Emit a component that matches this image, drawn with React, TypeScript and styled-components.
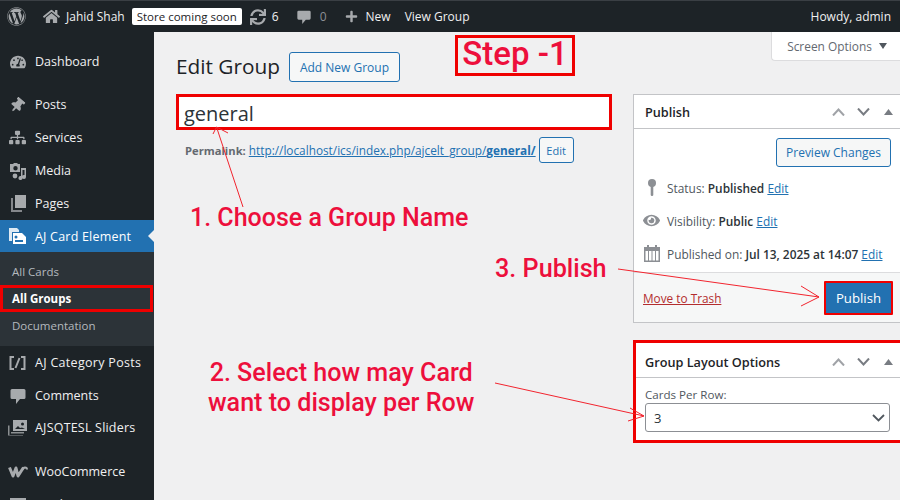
import React from "react";
import styled, { createGlobalStyle } from "styled-components";
import { FaWordpress, FaTachometerAlt, FaThumbtack, FaSitemap, FaSync, FaPlus, FaHome, FaEye } from "react-icons/fa";

const Global = createGlobalStyle`
  html, body { margin: 0; padding: 0; background: #f0f0f1; }
  body { width: 900px; height: 500px; overflow: hidden; font-family: "Open Sans", "Noto Sans", sans-serif; }
`;
const Page = styled.div`position: relative; width: 900px; height: 500px; overflow: hidden; display: flex; flex-direction: column; background: #f0f0f1;`;
const TopBar = styled.header`height: 32px; flex: none; background: #1d2327; color: #f0f0f1; display: flex; align-items: center; font-size: 12px; padding: 0 9px 0 7px; box-sizing: border-box; border-top: 1px solid #3a3f44;`;
const BarItem = styled.span<{ $gap?: number; $dim?: boolean; $inner?: number }>`display: inline-flex; align-items: center; gap: ${p => p.$inner ?? 6}px; margin-left: ${p => p.$gap ?? 0}px; color: ${p => p.$dim ? "#8c8f94" : "#f0f0f1"}; svg { color: #a7aaad; flex: none; }`;
const Badge = styled.span`background: #fff; color: #1d2327; border-radius: 2px; height: 17px; padding: 0 5px; margin-left: 7px; line-height: 17px; font-size: 11.5px;`;
const Howdy = styled.span`margin-left: auto;`;
const Body = styled.div`flex: 1; display: flex; min-height: 0;`;
const Side = styled.nav`width: 154px; flex: none; background: #1d2327; padding-top: 13px; box-sizing: border-box; overflow: hidden;`;
const MenuItem = styled.div<{ $active?: boolean; $h?: number; $mt?: number; $track?: number }>`position: relative; height: ${p => p.$h ?? 33}px; margin-top: ${p => p.$mt ?? 0}px; display: flex; align-items: center; padding-left: 8px; gap: 8px; font-size: 12.5px; letter-spacing: ${p => p.$track ?? 0}px; background: ${p => p.$active ? "#2271b1" : "transparent"}; color: ${p => p.$active ? "#fff" : "#f0f0f1"}; svg { flex: none; color: ${p => p.$active ? "#fff" : "#a7aaad"}; }`;
const IconSlot = styled.span`width: 19px; height: 18px; display: flex; align-items: center; justify-content: center; flex: none;`;
const TiltSlot = styled(IconSlot)`transform: rotate(40deg);`;
const Notch = styled.span`position: absolute; right: 0; top: 10px; border: 6px solid transparent; border-right-color: #f0f0f1; border-left-width: 0;`;
const SubMenu = styled.div`background: #2c3338; padding: 6px 0 7px;`;
const SubItem = styled.div<{ $current?: boolean }>`height: 27px; line-height: 27px; padding-left: 12px; font-size: 11.5px; font-weight: ${p => p.$current ? 700 : 400}; color: ${p => p.$current ? "#fff" : "#b4b9be"}; box-sizing: border-box;`;
const Marked = styled.div`outline: 3px solid #ef0000; outline-offset: -3px; margin-right: 1px; background: #2c3338;`;

const Main = styled.main`position: relative; flex: 1; min-width: 0; padding: 20px 0 0 22px; box-sizing: border-box;`;
const ScreenOptions = styled.div`position: absolute; top: 0; right: 0; width: 129px; height: 29px; background: #fff; border: 1px solid #dcdcde; border-top: none; border-right: none; border-radius: 0 0 0 4px; box-sizing: border-box; display: flex; align-items: center; justify-content: center; gap: 7px; padding-left: 2px; font-size: 11.9px; color: #646970;`;
const Caret = styled.span`width: 0; height: 0; border: 4px solid transparent; border-top: 6px solid #50575e; border-bottom: 0;`;
const TitleRow = styled.div`display: flex; align-items: center; gap: 9px; height: 30px;`;
const H1 = styled.h1`margin: -2px 0 0 0; font-weight: 400; font-size: 20.8px; color: #1d2327;`;
const OutlineBtn = styled.span<{ $w: number; $h: number; $fs?: number }>`display: inline-flex; align-items: center; justify-content: center; width: ${p => p.$w}px; height: ${p => p.$h}px; box-sizing: border-box; border: 1px solid #2271b1; color: #2271b1; background: #f6f7f7; border-radius: 3px; font-size: ${p => p.$fs ?? 12}px; flex: none;`;
const Cols = styled.div`display: flex; margin-top: 12px; gap: 21px; align-items: flex-start;`;
const LeftCol = styled.div`width: 436px; flex: none;`;
const TitleInput = styled.div`height: 36px; box-sizing: border-box; border: 3px solid #ef0000; background: #fff; font-size: 20px; padding-left: 5px; color: #2c3338; line-height: 33px;`;
const Permalink = styled.div`display: flex; align-items: center; margin: 7px 0 0 9px; height: 26px; font-size: 11.2px; color: #646970; white-space: nowrap; gap: 3px;`;
const Link = styled.a`color: #2271b1; text-decoration: underline;`;
const PermaLinkUrl = styled(Link)`font-size: 11.8px; margin-top: -1px;`;
const RightCol = styled.div`width: 267px; flex: none; display: flex; flex-direction: column; gap: 17px;`;
const Box = styled.section<{ $mark?: boolean }>`background: #fff; border: ${p => p.$mark ? "3px solid #ef0000" : "1px solid #c3c4c7"}; border-right: none; box-sizing: border-box;`;
const BoxHead = styled.div<{ $h: number; $pad: number; $top?: number }>`height: ${p => p.$h}px; box-sizing: border-box; border-bottom: 1px solid #c3c4c7; display: flex; align-items: center; padding: ${p => p.$top ?? 0}px 0 0 ${p => p.$pad}px; font-size: 12.7px; font-weight: 600; color: #1d2327; justify-content: space-between;`;
const Handles = styled.span`display: flex; align-items: center; gap: 12px; margin-right: 7px; color: #787c82;`;
const FadedHandle = styled.span`opacity: 0.7; display: flex;`;
const TriHandle = styled.svg`margin-left: 2px;`;
const Actions = styled.div`display: flex; justify-content: flex-end; padding: 9px 9px 0 0;`;
const Meta = styled.div`display: flex; align-items: center; height: 33px; padding-left: 8px; font-size: 11.9px; color: #50575e; gap: 6px; white-space: nowrap; b { color: #2c3338; font-weight: 600; } svg { color: #8c8f94; flex: none; }`;
const MetaList = styled.div`padding-top: 4px;`;
const Footer = styled.div`height: 50px; margin-top: 2px; box-sizing: border-box; border-top: 1px solid #dcdcde; background: #f6f7f7; display: flex; align-items: center; justify-content: space-between; padding: 0 7px 0 9px;`;
const Trash = styled.a`color: #b32d2e; text-decoration: underline; font-size: 11.8px;`;
const PublishBtn = styled.span`width: 69px; height: 34px; box-sizing: border-box; background: #2271b1; border: 2px solid #ef0000; color: #fff; font-size: 13.2px; display: flex; align-items: center; justify-content: center; border-radius: 1px;`;
const Field = styled.div`padding: 8px 10px 0 9px; height: 62px; box-sizing: border-box;`;
const FieldLabel = styled.div`font-size: 11.6px; color: #50575e; height: 17px; line-height: 17px;`;
const SelectBox = styled.div`height: 29px; box-sizing: border-box; border: 1px solid #8c8f94; border-radius: 3px; display: flex; align-items: center; justify-content: space-between; padding: 0 4px 0 8px; font-size: 13px; color: #2c3338;`;

const Overlay = styled.svg`position: absolute; inset: 0; width: 900px; height: 500px; pointer-events: none;`;
const Note = styled.div<{ $x: number; $y: number; $fs: number; $center?: boolean }>`position: absolute; left: ${p => p.$x}px; top: ${p => p.$y}px; font-family: Roboto, "Liberation Sans", sans-serif; font-weight: 500; font-size: ${p => p.$fs}px; color: #ed0f3c; white-space: nowrap; line-height: 30px; text-align: ${p => p.$center ? "center" : "left"};`;
const Step = styled.div`position: absolute; left: 455px; top: 35px; width: 120px; height: 41px; box-sizing: border-box; border: 3px solid #ef0000; font-family: Roboto, "Liberation Sans", sans-serif; font-weight: 500; font-size: 33px; line-height: 32px; color: #ed0f3c; text-align: center; white-space: nowrap;`;

const Chevron = ({ up }: { up?: boolean }) => (
  <svg width="13" height="8" viewBox="0 0 13 8" fill="none" stroke="currentColor" strokeWidth="2"><path d={up ? "M1 7.500l5.500-6L12 7.500" : "M1 .5l5.500 6L12 .5"} /></svg>
);
const HandleSet = () => (
  <Handles>
    <FadedHandle><Chevron up /></FadedHandle>
    <Chevron />
    <TriHandle width="9" height="6" viewBox="0 0 9 6" fill="currentColor"><path d="M4.500 0l4.500 6H0z" /></TriHandle>
  </Handles>
);
const Bubble = ({ s = 18 }: { s?: number }) => <svg width={s} height={s} viewBox="0 0 18 18" fill="currentColor"><path d="M3 2h12a1.500 1.500 0 0 1 1.500 1.500v7A1.500 1.500 0 0 1 15 12h-4l-4 5v-5H3a1.500 1.500 0 0 1-1.500-1.500v-7A1.500 1.500 0 0 1 3 2z" /></svg>;
const MediaIcon = () => <svg width="18" height="18" viewBox="0 0 18 18" fill="currentColor"><path d="M1 2h3l1-1h3l1 1h2v8H1zM6.500 4a2.200 2.200 0 1 0 0 4.400 2.200 2.200 0 0 0 0-4.400z" fillRule="evenodd" /><path d="M12 6h5v9a2 2 0 1 1-1.500-1.900V8h-2v8a2 2 0 1 1-1.500-1.900z" /><circle cx="6" cy="14" r="2.400" /></svg>;
const PagesIcon = () => <svg width="16" height="17" viewBox="0 0 16 17" fill="currentColor"><path d="M5 0h11v13H5z" /><path d="M3 3v12h9v2H1V3z" opacity=".75" /></svg>;
const CardIcon = () => <svg width="19" height="18" viewBox="0 0 19 18" fill="currentColor"><path d="M1 1h8l2 2v2H4v9H1z" opacity=".85" /><path d="M5 6h9l4 4v7H5zM8 8.500a1.500 1.500 0 1 0 0 3 1.500 1.500 0 0 0 0-3zM7 13v2h8v-2z" fillRule="evenodd" /></svg>;
const ShortIcon = () => <svg width="17" height="14" viewBox="0 0 17 14" fill="none" stroke="currentColor" strokeWidth="2"><path d="M5 1H1.500v12H5M12 1h3.500v12H12M10.500 2L6.500 12" /></svg>;
const SliderIcon = () => <svg width="19" height="16" viewBox="0 0 19 16" fill="currentColor"><path d="M5 0h14v11H5zM14.500 2.500a1.500 1.500 0 1 0 0 3 1.500 1.500 0 0 0 0-3zM7 9l3-3 2 2 2-.5 3 1.500z" fillRule="evenodd" /><path d="M3 3v9h13v1.500H3zM0 5.500v10h15V15H1.500V5.500z" opacity=".8" /></svg>;
const WooIcon = () => <svg width="20" height="12" viewBox="0 0 20 12" fill="none" stroke="currentColor" strokeWidth="3" strokeLinejoin="round"><path d="M1.500 1.500L5 10l3-8 2 8 5.500-8.500" /><path d="M15 3.500a2 2 0 0 1 4 0" strokeWidth="2" /></svg>;
const Pin = () => <svg width="12" height="18" viewBox="0 0 12 18" fill="currentColor"><circle cx="6" cy="4" r="4" /><rect x="4.700" y="6" width="2.600" height="11" rx="1.200" /></svg>;
const CalendarIcon = () => <svg width="16" height="17" viewBox="0 0 16 17" fill="currentColor"><path fillRule="evenodd" d="M0 2h3V0h2v2h6V0h2v2h3v15H0zM1.500 6v9.500h2.500V6zm3.500 0v9.500h2.500V6zm3.500 0v9.500H11V6zm3.500 0v9.500h2.500V6z" /></svg>;
const ProductIcon = () => <svg width="18" height="16" viewBox="0 0 18 16" fill="currentColor"><path d="M1 1h16v14H1z" /></svg>;
const ChevronSm = () => <svg width="13" height="8" viewBox="0 0 13 8" fill="none" stroke="#50575e" strokeWidth="1.800"><path d="M1 1l5.500 5.500L12 1" /></svg>;

type ItemProps = { icon: React.ReactNode; label: string; $h?: number; $mt?: number; $active?: boolean; $track?: number; children?: React.ReactNode };
const Item = ({ icon, label, children, ...rest }: ItemProps) => (
  <MenuItem {...rest}><IconSlot>{icon}</IconSlot>{label}{children}</MenuItem>
);

export default function App() {
  return (
    <Page>
      <Global />
      <TopBar>
        <FaWordpress size={19} color="#a7aaad" />
        <BarItem $gap={17}><FaHome size={17} />Jahid Shah</BarItem>
        <Badge>Store coming soon</Badge>
        <BarItem $gap={8}><FaSync size={16} />6</BarItem>
        <BarItem $gap={17}><Bubble s={16} /></BarItem>
        <BarItem $gap={8} $dim>0</BarItem>
        <BarItem $gap={18} $inner={8}><FaPlus size={13} />New</BarItem>
        <BarItem $gap={14}>View Group</BarItem>
        <Howdy>Howdy, admin</Howdy>
      </TopBar>
      <Body>
        <Side>
          <Item icon={<FaTachometerAlt size={16} />} label="Dashboard" />
          <Item $mt={10} icon={<TiltSlot><FaThumbtack size={15} /></TiltSlot>} label="Posts" />
          <Item icon={<FaSitemap size={17} />} label="Services" />
          <Item icon={<MediaIcon />} label="Media" />
          <Item icon={<PagesIcon />} label="Pages" />
          <Item $active $h={32} $track={0.2} icon={<CardIcon />} label="AJ Card Element"><Notch /></Item>
          <SubMenu>
            <SubItem>All Cards</SubItem>
            <Marked><SubItem $current>All Groups</SubItem></Marked>
            <SubItem>Documentation</SubItem>
          </SubMenu>
          <Item $track={0.3} icon={<ShortIcon />} label="AJ Category Posts" />
          <Item icon={<Bubble />} label="Comments" />
          <Item $h={31} $track={0.2} icon={<SliderIcon />} label="AJSQTESL Sliders" />
          <Item $mt={12} icon={<WooIcon />} label="WooCommerce" />
          <Item icon={<ProductIcon />} label="Products" />
        </Side>
        <Main>
          <ScreenOptions>Screen Options<Caret /></ScreenOptions>
          <TitleRow>
            <H1>Edit Group</H1>
            <OutlineBtn $w={111} $h={30}>Add New Group</OutlineBtn>
          </TitleRow>
          <Cols>
            <LeftCol>
              <TitleInput>general</TitleInput>
              <Permalink>
                <b>Permalink:</b>
                <PermaLinkUrl>http://localhost/ics/index.php/ajcelt_group/<b>general/</b></PermaLinkUrl>
                <OutlineBtn $w={35} $h={26} $fs={11}>Edit</OutlineBtn>
              </Permalink>
            </LeftCol>
            <RightCol>
              <Box>
                <BoxHead $h={34} $pad={11}>Publish<HandleSet /></BoxHead>
                <Actions><OutlineBtn $w={115} $h={29}>Preview Changes</OutlineBtn></Actions>
                <MetaList>
                  <Meta><IconSlot><Pin /></IconSlot><span>Status: <b>Published</b> <Link>Edit</Link></span></Meta>
                  <Meta><IconSlot><FaEye size={17} /></IconSlot><span>Visibility: <b>Public</b> <Link>Edit</Link></span></Meta>
                  <Meta><IconSlot><CalendarIcon /></IconSlot><span>Published on: <b>Jul 13, 2025 at 14:07</b> <Link>Edit</Link></span></Meta>
                </MetaList>
                <Footer><Trash>Move to Trash</Trash><PublishBtn>Publish</PublishBtn></Footer>
              </Box>
              <Box $mark>
                <BoxHead $h={35} $pad={9} $top={3}>Group Layout Options<HandleSet /></BoxHead>
                <Field>
                  <FieldLabel>Cards Per Row:</FieldLabel>
                  <SelectBox>3<ChevronSm /></SelectBox>
                </Field>
              </Box>
            </RightCol>
          </Cols>
        </Main>
      </Body>
      <Step>Step -1</Step>
      <Note $x={190} $y={203} $fs={25}>1. Choose a Group Name</Note>
      <Note $x={495} $y={254} $fs={25.2}>3. Publish</Note>
      <Note $x={208} $y={358} $fs={25.1} $center>2. Select how may Card<br />want to display per Row</Note>
      <Overlay viewBox="0 0 900 500" fill="none" stroke="#f2242e" strokeWidth="1">
        <path d="M243 207L216.500 127M213 134L216.500 127L228 133" />
        <path d="M618 269L819 297M801 286L819 297L801 306" />
        <path d="M495 383L644 416M630 408L644 416L628 421" />
      </Overlay>
    </Page>
  );
}
